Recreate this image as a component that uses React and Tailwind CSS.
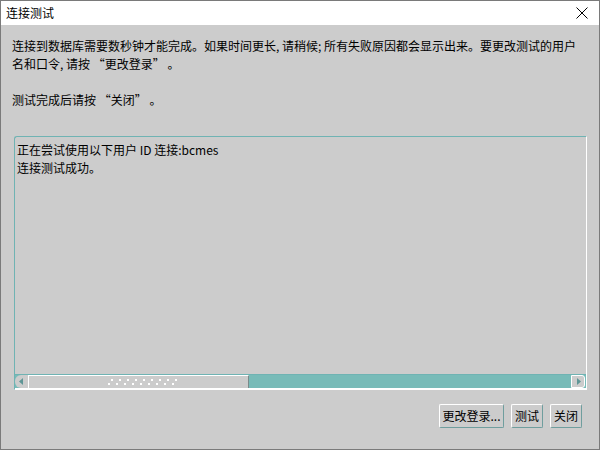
const font = { fontFamily: '"Noto Sans CJK SC", "DejaVu Sans", sans-serif' };

const Btn = ({ children, w }) => (
  <button
    className={`h-[24px] ${w} bg-[#cccccc] border border-t-white border-l-white border-b-[#6f9e9e] border-r-[#6f9e9e] rounded-[2px] text-[12px] text-black flex items-center justify-center`}
  >
    {children}
  </button>
);

export default function App() {
  return (
    <div
      className="w-[600px] h-[450px] bg-[#cccccc] border border-[#7a7a7a] flex flex-col text-black"
      style={font}
    >
      <div className="h-[24px] bg-white flex items-center justify-between pl-[5px] pr-[11px] shrink-0">
        <span className="text-[12px]">连接测试</span>
        <svg width="12" height="12" viewBox="0 0 12 12">
          <path d="M0.5 0.5 L11.5 11.5 M11.5 0.5 L0.5 11.5" stroke="#000" strokeWidth="1" />
        </svg>
      </div>
      <div className="flex-1 flex flex-col pl-[11px] pr-[11px] pt-[12px]">
        <div className="text-[12px] leading-[18px] pr-[6px]">
          <p>
            连接到数据库需要数秒钟才能完成。如果时间更长, 请稍候; 所有失败原因都会显示出来。要更改测试的用户名和口令, 请按 “更改登录” 。
          </p>
          <p className="mt-[18px]">测试完成后请按 “关闭” 。</p>
        </div>
        <div className="mt-[27px] ml-[2px] mr-[1px] h-[254px] flex flex-col border border-t-[#6fb3b3] border-l-[#6fb3b3] border-b-white border-r-white rounded-tl-[3px]">
          <div className="flex-1 pl-[2px] pt-[4px] text-[12px] leading-[18px]">
            <p>正在尝试使用以下用户 ID 连接:bcmes</p>
            <p>连接测试成功。</p>
          </div>
          <div className="h-[15px] flex bg-[#78bbb8] border-t border-t-[#6fb3b3] border-b border-b-white">
            <div className="w-[14px] bg-[#cccccc] border-r border-white rounded-l-[6px] flex items-center justify-center">
              <svg width="5" height="7" viewBox="0 0 5 7">
                <path d="M4 0 L0 3.5 L4 7 Z" fill="#5f9696" />
              </svg>
            </div>
            <div className="w-[220px] bg-[#cccccc] border-t border-white border-r border-r-[#7a8a8a] flex items-center justify-center">
              <div className="grid grid-cols-[repeat(9,8px)] gap-y-[2px] ml-[10px]">
                {Array.from({ length: 18 }).map((_, i) => (
                  <span
                    key={i}
                    className={`w-[2px] h-[2px] bg-white ${i < 9 ? "ml-[3px]" : ""}`}
                  />
                ))}
              </div>
            </div>
            <div className="flex-1" />
            <div className="w-[14px] bg-[#cccccc] border border-white rounded-r-[3px] flex items-center justify-center mr-[1px]">
              <svg width="5" height="7" viewBox="0 0 5 7">
                <path d="M1 0 L5 3.5 L1 7 Z" fill="#5f9696" />
              </svg>
            </div>
          </div>
        </div>
        <div className="flex justify-end gap-[7px] mt-[14px] pr-[6px]">
          <Btn w="w-[65px]">更改登录...</Btn>
          <Btn w="w-[32px]">测试</Btn>
          <Btn w="w-[32px]">关闭</Btn>
        </div>
      </div>
    </div>
  );
}
